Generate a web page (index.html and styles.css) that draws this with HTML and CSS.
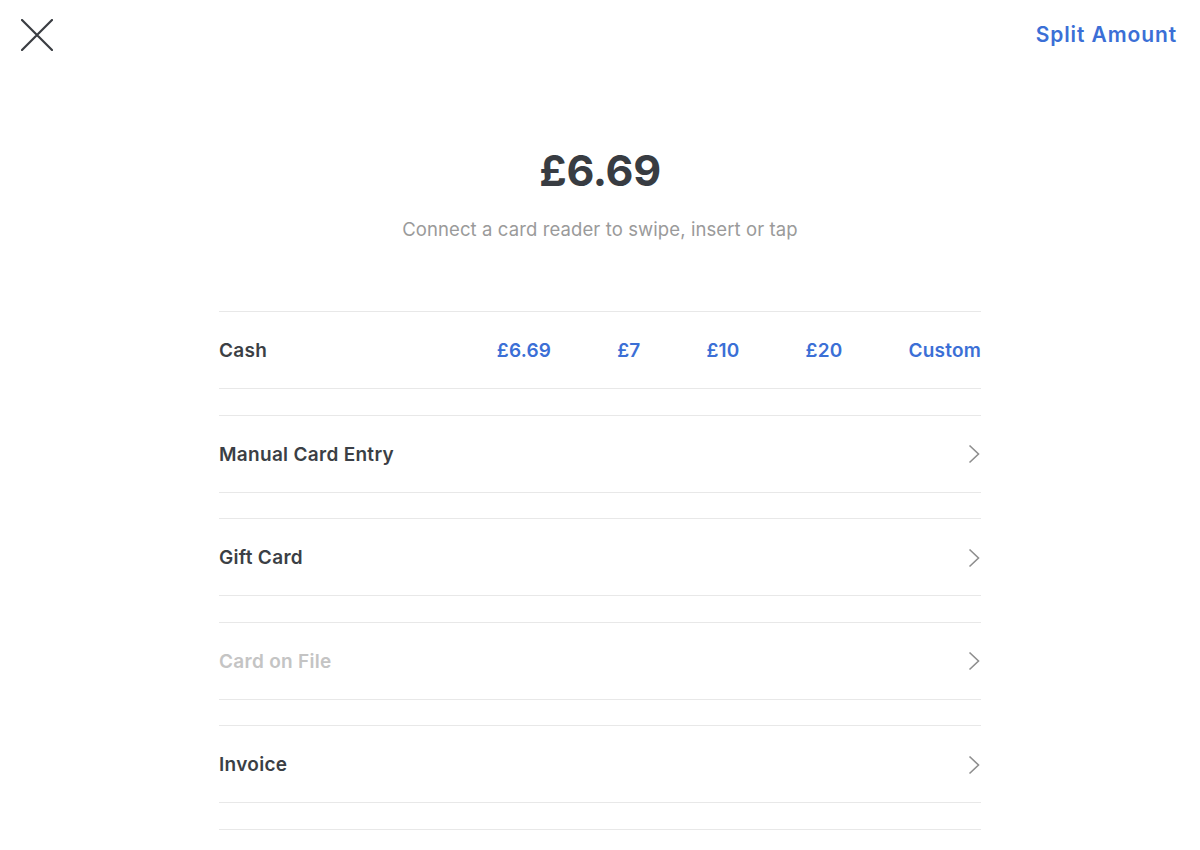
FILE: index.html
```html
<!DOCTYPE html>
<html>
<head>
<meta charset="utf-8">
<link rel="stylesheet" href="styles.css">
</head>
<body>
<div class="page">
  <header class="topbar">
    <button class="close" aria-label="Close">
      <svg width="32" height="32" viewBox="0 0 32 32"><path d="M1 1 L31 31 M31 1 L1 31" stroke="#3a3d42" stroke-width="2.2" stroke-linecap="round" fill="none"/></svg>
    </button>
    <a class="split">Split Amount</a>
  </header>

  <section class="summary">
    <h1 class="amount">£6.69</h1>
    <p class="hint">Connect a card reader to swipe, insert or tap</p>
  </section>

  <section class="methods">
    <div class="group">
      <div class="row">
        <span class="label">Cash</span>
        <div class="cash-options">
          <a>£6.69</a><a>£7</a><a>£10</a><a>£20</a><a>Custom</a>
        </div>
      </div>
    </div>
    <div class="group">
      <div class="row">
        <span class="label">Manual Card Entry</span>
        <svg class="chev" width="12" height="20" viewBox="0 0 12 20"><path d="M1.5 1.5 L10.5 10 L1.5 18.5" stroke="#8e8e8e" stroke-width="1.6" fill="none"/></svg>
      </div>
    </div>
    <div class="group">
      <div class="row">
        <span class="label">Gift Card</span>
        <svg class="chev" width="12" height="20" viewBox="0 0 12 20"><path d="M1.5 1.5 L10.5 10 L1.5 18.5" stroke="#8e8e8e" stroke-width="1.6" fill="none"/></svg>
      </div>
    </div>
    <div class="group">
      <div class="row">
        <span class="label disabled">Card on File</span>
        <svg class="chev" width="12" height="20" viewBox="0 0 12 20"><path d="M1.5 1.5 L10.5 10 L1.5 18.5" stroke="#8e8e8e" stroke-width="1.6" fill="none"/></svg>
      </div>
    </div>
    <div class="group">
      <div class="row">
        <span class="label">Invoice</span>
        <svg class="chev" width="12" height="20" viewBox="0 0 12 20"><path d="M1.5 1.5 L10.5 10 L1.5 18.5" stroke="#8e8e8e" stroke-width="1.6" fill="none"/></svg>
      </div>
    </div>
    <div class="group last"></div>
  </section>
</div>
</body>
</html>
```
FILE: styles.css
```css
* { box-sizing: border-box; }
html, body {
  margin: 0;
  padding: 0;
  background: #ffffff;
  height: 850px;
  overflow: hidden;
}
body {
  font-family: "Inter", "Liberation Sans", sans-serif;
  color: #3b3f45;
}
.page {
  width: 1200px;
}
.topbar {
  display: flex;
  justify-content: space-between;
  align-items: center;
  padding: 17px 23px 0 21px;
  height: 52px;
}
.close {
  border: 0;
  background: none;
  padding: 0;
  width: 32px;
  height: 32px;
  display: flex;
}
.split {
  color: #3b6fd6;
  font-size: 21px;
  font-weight: 600;
  letter-spacing: 0.9px;
}
.summary {
  text-align: center;
  padding-top: 92px;
}
.amount {
  margin: 0;
  font-size: 43px;
  font-weight: 700;
  line-height: 52px;
  letter-spacing: -0.3px;
  color: #383c42;
}
.hint {
  margin: 21px 0 0;
  font-size: 18.5px;
  font-weight: 400;
  color: #9a9a9a;
  line-height: 24px;
  letter-spacing: 0.1px;
}
.methods {
  width: 762px;
  margin: 70px auto 0;
  display: flex;
  flex-direction: column;
  gap: 25.5px;
}
.group {
  border-top: 1px solid #e8e8e8;
  border-bottom: 1px solid #e8e8e8;
}
.group.last {
  border-bottom: 0;
  height: 1px;
}
.row {
  height: 76px;
  padding-top: 1px;
  display: flex;
  align-items: center;
  justify-content: space-between;
}
.label {
  font-size: 19px;
  font-weight: 600;
  letter-spacing: 0.3px;
  color: #3b3f45;
}
.label.disabled {
  color: #c4c4c4;
}
.cash-options {
  display: flex;
  gap: 66px;
}
.cash-options a {
  color: #3b6fd6;
  font-size: 19px;
  font-weight: 600;
  letter-spacing: 0.2px;
}
.chev {
  margin-right: 1px;
}
```
